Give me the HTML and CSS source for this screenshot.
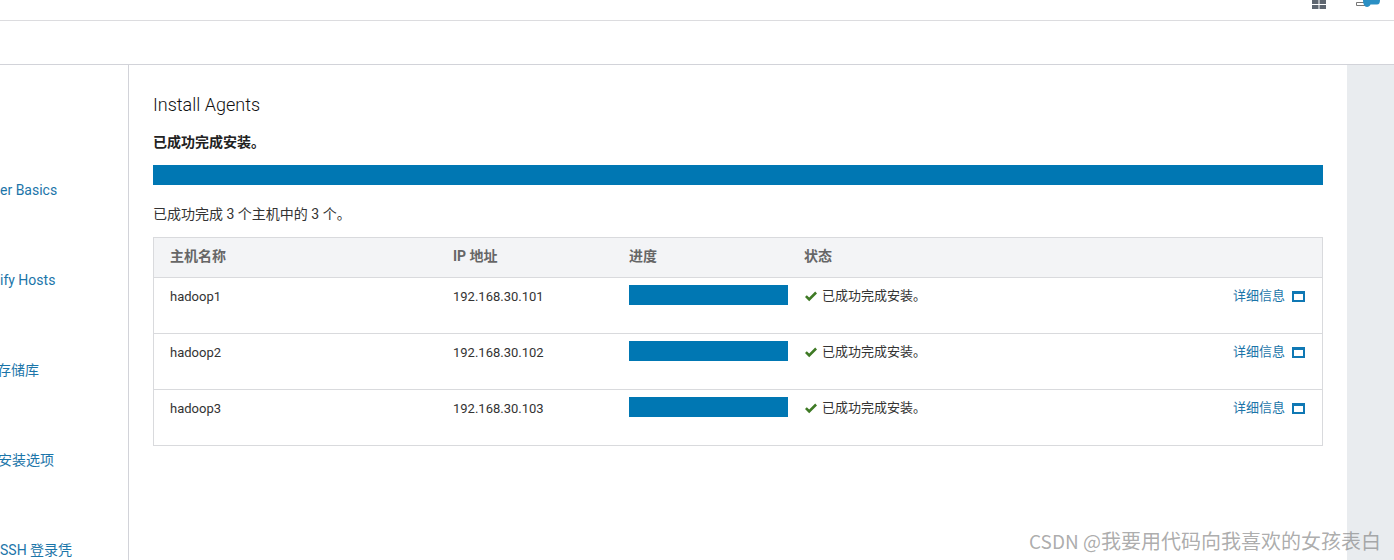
FILE: index.html
```html
<!DOCTYPE html>
<html lang="zh">
<head>
<meta charset="utf-8">
<title>Install Agents</title>
<link rel="stylesheet" href="styles.css">
</head>
<body>
<header class="topbar">
  <svg class="icon-grid" width="14" height="9" viewBox="0 0 14 9"><path d="M0 0h6.500v4H0zM7.500 0H14v4H7.500zM0 5h6.500v4H0zM7.500 5H14v4H7.500z"/></svg>
  <svg class="icon-user" width="24" height="9" viewBox="0 0 24 9"><path class="user-body" d="M.5 2.500h9v3h-9z"/><path class="user-head" d="M7 0h17c0 3-1 4.500-3 4.500h-6.500C14 6 12.500 7 11 7 8.500 7 7 4 7 0z"/></svg>
</header>
<div class="subbar"></div>
<div class="layout">
  <nav class="sidebar">
    <a href="#">er Basics</a>
    <a href="#">ify Hosts</a>
    <a href="#" class="clip-3">存储库</a>
    <a href="#" class="clip-2">安装选项</a>
    <a href="#">SSH 登录凭</a>
  </nav>
  <main class="content">
    <h1>Install Agents</h1>
    <p class="status-title">已成功完成安装。</p>
    <div class="bar-full"></div>
    <p class="summary">已成功完成 3 个主机中的 3 个。</p>
    <table class="hosts">
      <thead>
        <tr><th class="c-host">主机名称</th><th class="c-ip">IP 地址</th><th class="c-prog">进度</th><th colspan="2">状态</th></tr>
      </thead>
      <tbody>
        <tr>
          <td>hadoop1</td><td>192.168.30.101</td>
          <td><div class="bar-row"></div></td>
          <td class="c-status"><svg class="check" width="14" height="11" viewBox="0 0 14 11"><path d="M1 6l1.800-1.800L5.200 6.600 11.200.6 13 2.400 5.200 10.200z"/></svg>已成功完成安装。</td>
          <td class="c-link"><a href="#">详细信息<svg class="win" width="13" height="11" viewBox="0 0 13 11"><path d="M0 0h13v11H0zM2 3v6h9V3z" fill-rule="evenodd"/></svg></a></td>
        </tr>
        <tr>
          <td>hadoop2</td><td>192.168.30.102</td>
          <td><div class="bar-row"></div></td>
          <td class="c-status"><svg class="check" width="14" height="11" viewBox="0 0 14 11"><path d="M1 6l1.800-1.800L5.200 6.600 11.200.6 13 2.400 5.200 10.200z"/></svg>已成功完成安装。</td>
          <td class="c-link"><a href="#">详细信息<svg class="win" width="13" height="11" viewBox="0 0 13 11"><path d="M0 0h13v11H0zM2 3v6h9V3z" fill-rule="evenodd"/></svg></a></td>
        </tr>
        <tr>
          <td>hadoop3</td><td>192.168.30.103</td>
          <td><div class="bar-row"></div></td>
          <td class="c-status"><svg class="check" width="14" height="11" viewBox="0 0 14 11"><path d="M1 6l1.800-1.800L5.200 6.600 11.200.6 13 2.400 5.200 10.200z"/></svg>已成功完成安装。</td>
          <td class="c-link"><a href="#">详细信息<svg class="win" width="13" height="11" viewBox="0 0 13 11"><path d="M0 0h13v11H0zM2 3v6h9V3z" fill-rule="evenodd"/></svg></a></td>
        </tr>
      </tbody>
    </table>
  </main>
  <aside class="gutter"></aside>
</div>
<div class="watermark"><span class="wm-latin">CSDN @</span>我要用代码向我喜欢的女孩表白</div>
</body>
</html>
```
FILE: styles.css
```css
* { box-sizing: border-box; }
html, body { margin: 0; height: 560px; overflow: hidden; background: #fff; }
body {
  font-family: Roboto, "Noto Sans CJK SC", sans-serif;
  font-size: 13px;
  color: #333;
  position: relative;
}
a { color: #1b75a9; text-decoration: none; }

.topbar {
  height: 21px;
  border-bottom: 1px solid #dcdcdf;
  display: flex;
  justify-content: flex-end;
  align-items: flex-start;
  padding-right: 14px;
}
.icon-grid { fill: #5e6670; margin-right: 30px; }
.user-body { fill: #fff; stroke: #777; stroke-width: 1; }
.user-head { fill: #2a8fc4; }

.subbar { height: 44px; border-bottom: 1px solid #d2d3d9; }

.layout { display: flex; height: 495px; }
.sidebar {
  width: 129px;
  border-right: 1px solid #d2d3d9;
  padding-top: 116px;
  display: flex;
  flex-direction: column;
  gap: 72px;
  overflow: hidden;
  flex: none;
  font-size: 14px;
}
.sidebar a { line-height: 18px; white-space: nowrap; display: block; }
.sidebar .clip-3 { margin-left: -3px; }
.sidebar .clip-2 { margin-left: -2px; }

.content { flex: none; width: 1218px; padding: 30px 24px 0; }
.content h1 { margin: 0; font-size: 18px; font-weight: 300; line-height: 20px; color: #111; }
.status-title { margin: 17px 0 0; font-size: 14px; font-weight: 700; line-height: 21px; color: #222; }
.bar-full { height: 20px; margin-top: 12px; background: #0077b3; }
.summary { margin: 19px 0 0; font-size: 14px; line-height: 20px; color: #333; }

.hosts {
  width: 1170px;
  margin-top: 13px;
  border: 1px solid #d9dadd;
  border-collapse: separate;
  border-spacing: 0;
  table-layout: fixed;
}
.hosts th {
  height: 40px;
  background: #f3f4f6;
  text-align: left;
  font-size: 14px;
  font-weight: 700;
  color: #666;
  padding: 0 16px 6px;
  border-bottom: 1px solid #d9dadd;
}
.c-host { width: 283px; }
.c-ip { width: 176px; }
.c-prog { width: 175px; }
.hosts td {
  height: 56px;
  padding: 9px 0 0 16px;
  vertical-align: top;
  line-height: 20px;
  border-bottom: 1px solid #d9dadd;
}
.hosts tr:last-child td { border-bottom: 0; height: 55px; }
.hosts td.c-status { padding-top: 8px; }
.hosts td.c-link { padding: 8px 17px 0 0; text-align: right; }
.bar-row { height: 20px; margin-top: -2px; background: #0077b3; }
.check { fill: #3f7a25; margin-right: 4px; vertical-align: -2px; }
.win { fill: #0f78b4; margin-left: 7px; vertical-align: -2px; }

.gutter { flex: 1; background: #e9ecef; }

.watermark {
  position: absolute;
  right: 13px;
  top: 529px;
  font-family: "Noto Sans CJK SC", sans-serif;
  font-size: 20px;
  line-height: 24px;
  color: rgba(120, 120, 120, 0.62);
  white-space: nowrap;
}
.wm-latin { font-size: 19px; }
```
